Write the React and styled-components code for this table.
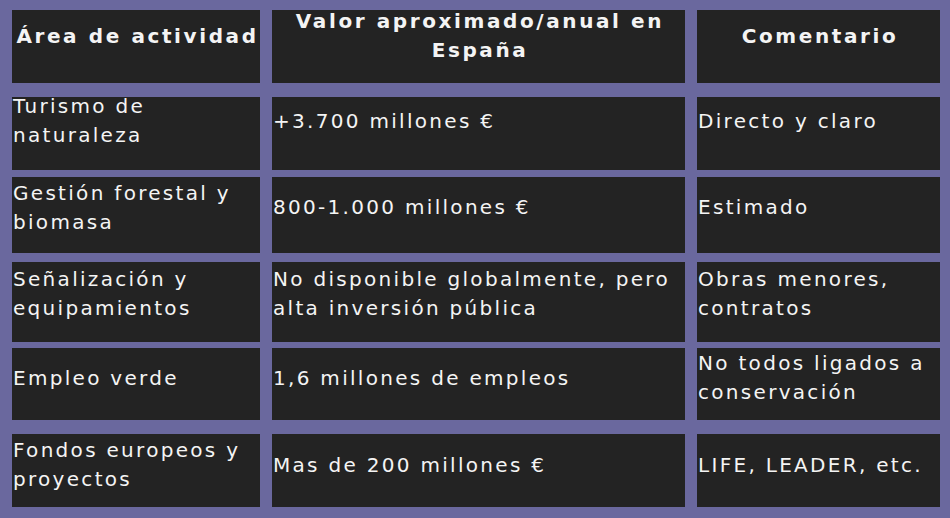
import React from "react";
import styled, { createGlobalStyle } from "styled-components";

const Global = createGlobalStyle`
  html, body {
    margin: 0;
    padding: 0;
    background: #6a689e;
  }
  body {
    width: 950px;
    height: 518px;
    overflow: hidden;
    font-family: "DejaVu Sans", Verdana, sans-serif;
  }
`;

const Table = styled.div`
  display: flex;
  flex-direction: column;
  padding: 10px 0 0 12px;
  width: 950px;
  height: 518px;
  box-sizing: border-box;
  background: #6a689e;
`;

const Row = styled.div`
  display: grid;
  flex: 0 0 auto;
  grid-template-columns: 248px 413px 243px;
  grid-template-rows: ${(p) => p.$h}px;
  column-gap: 12px;
  height: ${(p) => p.$h}px;
  margin-top: ${(p) => p.$mt}px;
`;

const Cell = styled.div`
  display: flex;
  align-items: center;
  justify-content: ${(p) => (p.$head ? "center" : "flex-start")};
  text-align: ${(p) => (p.$head ? "center" : "left")};
  box-sizing: border-box;
  min-height: 0;
  height: 100%;
  padding: 0 1px ${(p) => p.$pb}px ${(p) => (p.$head ? 4 : 1)}px;
  background: #232323;
  color: #f4f4f4;
  font-size: 20px;
  line-height: 29px;
  letter-spacing: ${(p) => (p.$head ? 2.6 : 2.3)}px;
  font-weight: ${(p) => (p.$head ? 700 : 400)};
`;

const header = ["Área de actividad", "Valor aproximado/anual en España", "Comentario"];

const rows = [
  { h: 73, mt: 14, pb: 25, c: ["Turismo de naturaleza", "+3.700 millones €", "Directo y claro"] },
  { h: 76, mt: 7, pb: 15, c: ["Gestión forestal y biomasa", "800-1.000 millones €", "Estimado"] },
  { h: 80, mt: 9, pb: 17, c: ["Señalización y equipamientos", "No disponible globalmente, pero alta inversión pública", "Obras menores, contratos"] },
  { h: 72, mt: 6, pb: 12, c: ["Empleo verde", "1,6 millones de empleos", "No todos ligados a conservación"] },
  { h: 73, mt: 14, pb: 11, c: ["Fondos europeos y proyectos", "Mas de 200 millones €", "LIFE, LEADER, etc."] },
];

export default function App() {
  return (
    <>
      <Global />
      <Table>
        <Row $h={73} $mt={0}>
          {header.map((t) => (
            <Cell key={t} $head $pb={21}>
              {t}
            </Cell>
          ))}
        </Row>
        {rows.map((r, i) => (
          <Row key={i} $h={r.h} $mt={r.mt}>
            {r.c.map((t) => (
              <Cell key={t} $pb={r.pb}>
                {t}
              </Cell>
            ))}
          </Row>
        ))}
      </Table>
    </>
  );
}
